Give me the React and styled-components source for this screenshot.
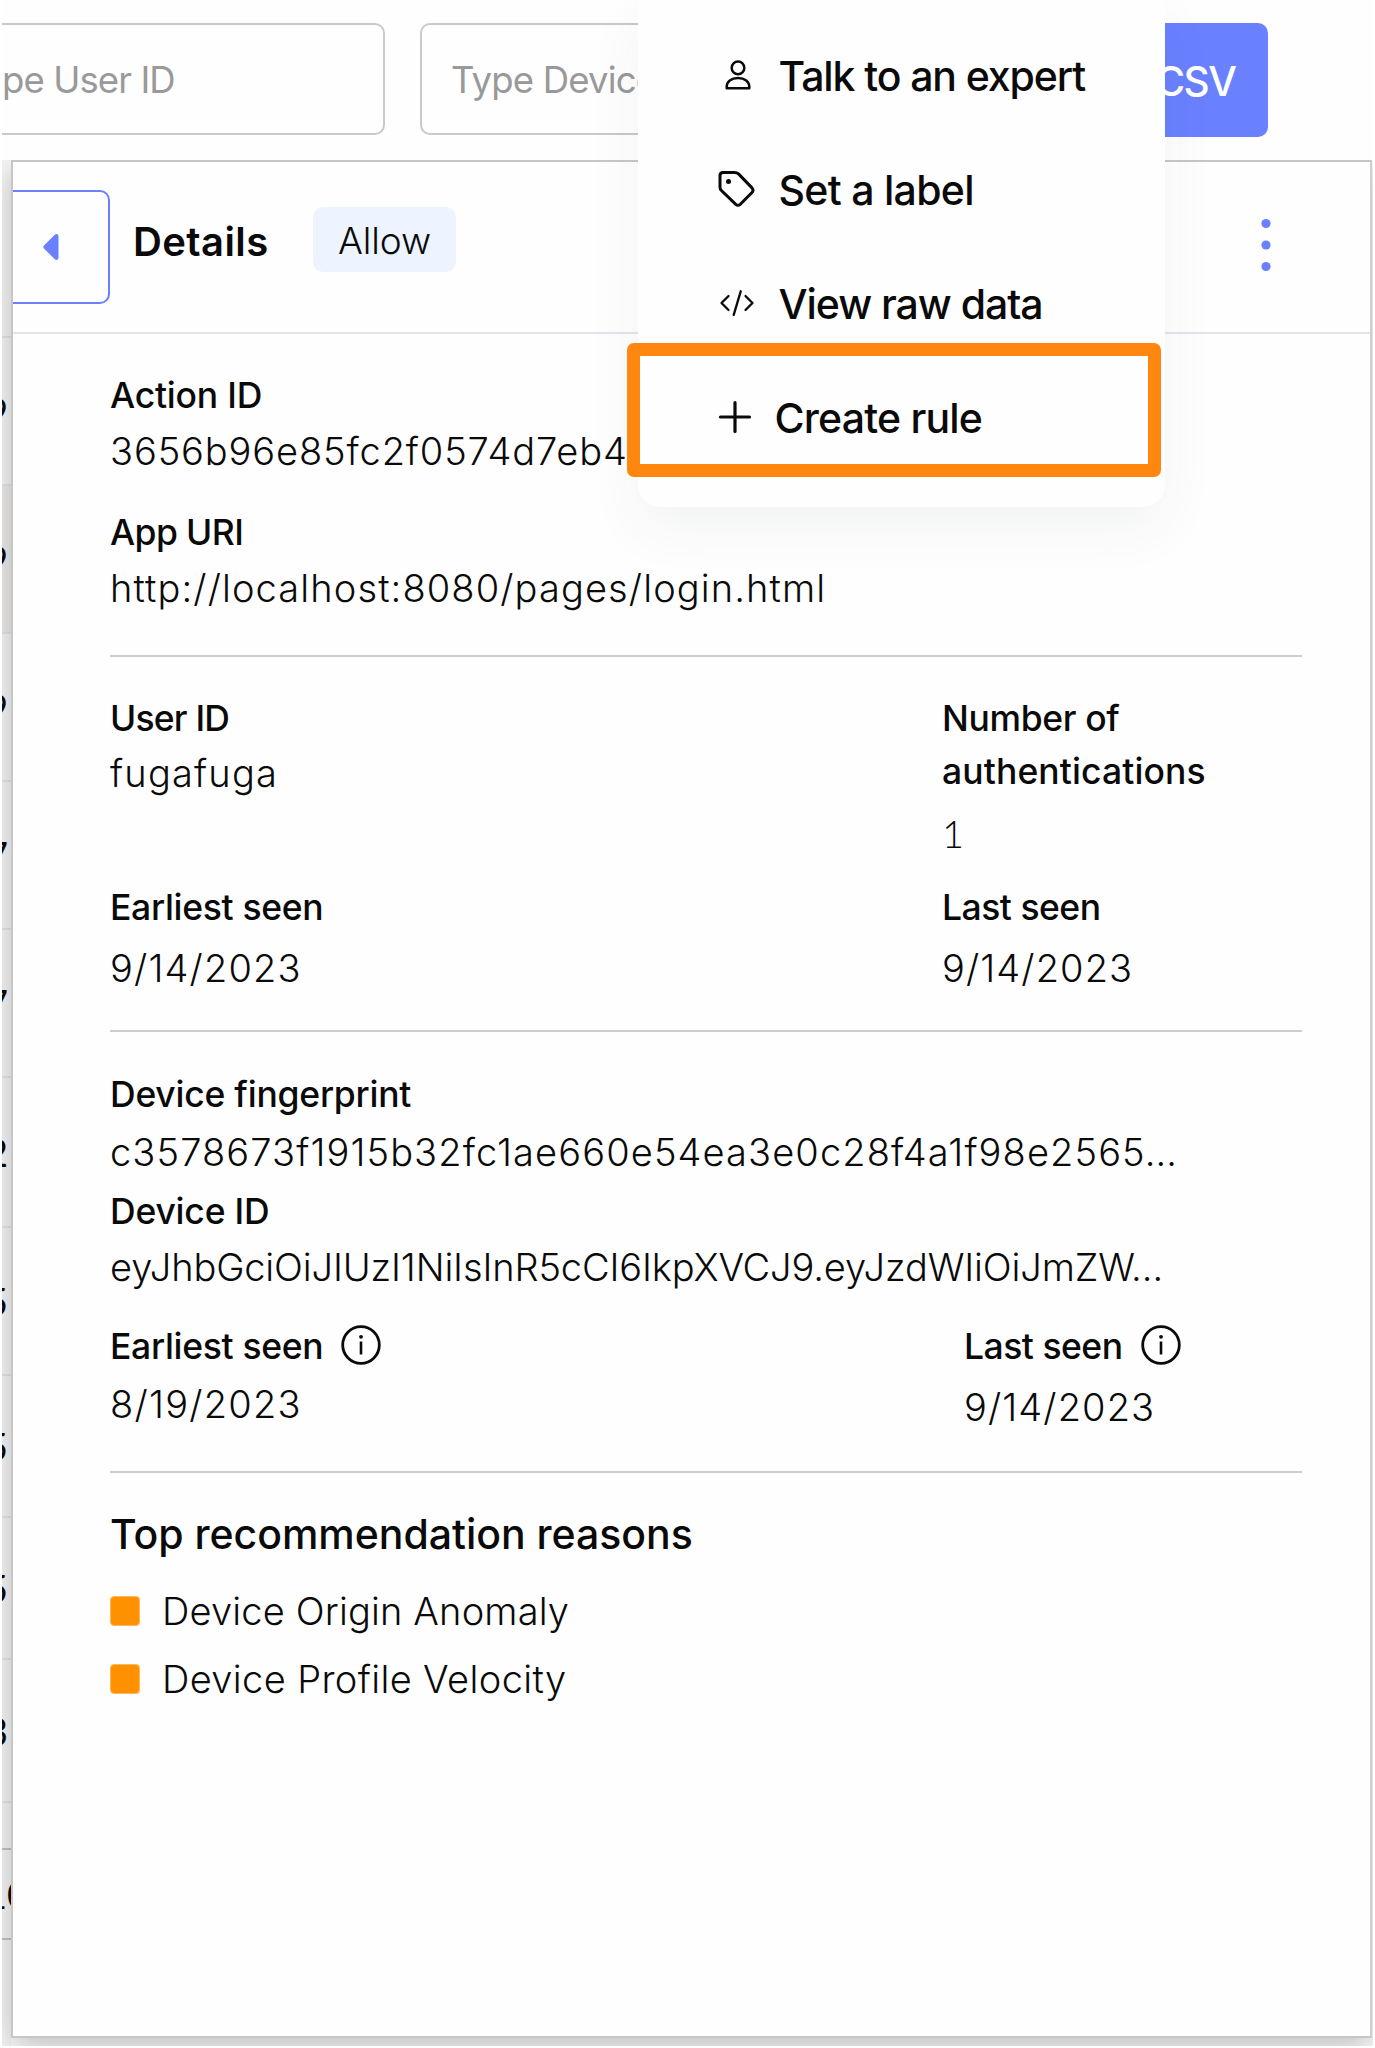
import React from "react";
import styled, { createGlobalStyle, css } from "styled-components";

const Global = createGlobalStyle`
  * { box-sizing: border-box; }
  body { margin: 0; background: #fff; font-family: Inter, "Liberation Sans", sans-serif; color: #0a0a0a; }
`;

const BLUE = "#6980ff";

const Page = styled.div`
  width: 1375px;
  height: 2048px;
  padding: 0 2px 2px;
  background: #fff;
  overflow: hidden;
`;
const Screen = styled.div`
  position: relative;
  height: 2046px;
  display: flex;
  flex-direction: column;
  overflow: hidden;
  background: #fefefe;
`;
const Toolbar = styled.div`
  position: relative;
  z-index: 1;
  flex: none;
  height: 160px;
  padding-top: 23px;
  display: flex;
  align-items: flex-start;
  background: #fefefe;
`;
const Field = styled.div`
  flex: none;
  width: 454px;
  height: 112px;
  margin-left: ${(p) => p.$ml}px;
  padding-left: 29px;
  border: 2px solid #c9c9c9;
  border-radius: 10px;
  font-size: 36.5px;
  line-height: 110px;
  letter-spacing: ${(p) => p.$ls}px;
  white-space: nowrap;
  color: #999;
`;
const CsvButton = styled.div`
  width: 200px;
  height: 114px;
  margin-left: auto;
  margin-right: 105.5px;
  padding-right: 32px;
  border-radius: 10px;
  background: #6a81ff;
  color: #fff;
  font-size: 40.5px;
  font-weight: 500;
  line-height: 118px;
  letter-spacing: -1.5px;
  text-align: right;
  white-space: nowrap;
`;
const Main = styled.div`
  flex: 1;
  display: flex;
  min-height: 0;
`;
const Strip = styled.div`
  flex: none;
  width: 9px;
  background: #f7f7f7;
  overflow: hidden;
`;
const StripRow = styled.div`
  display: flex;
  align-items: center;
  justify-content: flex-end;
  height: ${(p) => p.$h}px;
  border-bottom: 2px solid ${(p) => (p.$dark ? "#c4c4c4" : "#e6e6e6")};
  background: ${(p) => (p.$active ? "#efebeb" : "transparent")};
  font-family: Lato, sans-serif;
  font-size: 38px;
  white-space: nowrap;
`;
const StripText = styled.span`
  margin-right: ${(p) => p.$mr ?? 3}px;
`;
const Panel = styled.div`
  position: relative;
  flex: none;
  width: 1361px;
  height: 1878px;
  border: 2px solid #c6c6c6;
  border-right-color: #cfcfcf;
  background: #fefefe;
  box-shadow: 0 10px 30px rgba(0, 0, 0, 0.25);
`;
const Header = styled.div`
  display: flex;
  align-items: center;
  height: 172px;
  border-bottom: 2px solid #e0e5eb;
`;
const BackButton = styled.div`
  display: flex;
  align-items: center;
  width: 97px;
  height: 114px;
  padding-left: 28px;
  border: 2px solid ${BLUE};
  border-left: 0;
  border-radius: 0 10px 10px 0;
`;
const Title = styled.div`
  margin: 0 0 11px 23px;
  width: 180px;
  font-size: 40px;
  font-weight: 600;
  letter-spacing: 0.4px;
`;
const Badge = styled.div`
  width: 143px;
  height: 65px;
  margin-bottom: 16px;
  border-radius: 10px;
  background: #edf4ff;
  font-size: 37px;
  font-weight: 300;
  line-height: 67px;
  letter-spacing: -0.1px;
  text-align: center;
`;
const Dots = styled.svg`
  margin: 0 98px 4px auto;
`;
const Body = styled.div`
  width: 1289px;
  padding: 0 0 0 97px;
`;
const Section = styled.section`
  display: grid;
  grid-template-columns: ${(p) => p.$cols || "1fr"};
  padding: ${(p) => p.$pt}px 0 ${(p) => p.$pb}px;
  border-bottom: ${(p) => (p.$last ? 0 : 2)}px solid #cdcdcd;
`;
const line = css`
  display: flex;
  align-items: center;
  height: 52px;
  margin-top: ${(p) => p.$mt || 0}px;
  letter-spacing: ${(p) => p.$ls || 0}px;
  white-space: nowrap;
`;
const Label = styled.div`
  ${line}
  font-size: 35.5px;
  font-weight: 500;
`;
const Value = styled.div`
  ${line}
  font-size: 38px;
  font-weight: 300;
`;
const Count = styled(Value)`
  font-family: Lato, sans-serif;
`;
const Heading = styled.div`
  ${line}
  font-size: 41px;
  font-weight: 500;
`;
const Reason = styled(Value)`
  gap: 22px;
  &::before {
    content: "";
    width: 28px;
    height: 28px;
    border: 1px solid #ffb95c;
    border-radius: 4px;
    background: #ff9000;
  }
`;
const InfoSvg = styled.svg`
  margin: -2px 0 0 18px;
`;
const Menu = styled.div`
  position: absolute;
  z-index: 2;
  left: 636px;
  top: 0;
  width: 527px;
  height: 507px;
  padding-top: 19px;
  border-radius: 0 0 22px 22px;
  background: #fefefe;
  box-shadow: 0 22px 56px rgba(20, 50, 40, 0.055);
`;
const MenuItem = styled.div`
  display: flex;
  align-items: center;
  height: 114px;
  padding-left: 78px;
  font-size: 41px;
  font-weight: 500;
  letter-spacing: ${(p) => p.$ls}px;
  white-space: nowrap;
`;
const IconSlot = styled.span`
  flex: none;
  display: flex;
  justify-content: center;
  width: ${(p) => p.$w}px;
  margin: 0 ${(p) => p.$mr}px 3px 0;
`;
const Highlight = styled.div`
  position: absolute;
  left: -11px;
  top: 343px;
  width: 534px;
  height: 134px;
  border: 13px solid #ff870f;
  border-radius: 7px;
`;

const Info = () => (
  <InfoSvg width="40" height="40" viewBox="0 0 40 40" fill="none" stroke="#0a0a0a">
    <circle cx="20" cy="20" r="18.3" strokeWidth="2.8" />
    <path d="M20 16.500v13" strokeWidth="2.6" />
    <circle cx="20" cy="11.8" r="1.9" fill="#0a0a0a" stroke="none" />
  </InfoSvg>
);
const PersonIcon = () => (
  <svg width="26" height="30" viewBox="0 0 26 30" fill="none" stroke="#0a0a0a" strokeWidth="2.5">
    <circle cx="13" cy="7.900" r="6.300" />
    <path d="M1.700 28.200v-1.500c0-5.200 4.500-8.700 11.300-8.700s11.300 3.500 11.300 8.700v1.500z" strokeLinejoin="round" />
  </svg>
);
const TagIcon = () => (
  <svg width="37" height="38" viewBox="0 0 37 38" fill="none" stroke="#0a0a0a" strokeWidth="3" strokeLinejoin="round">
    <path d="M2 5.500q0-3 3-3h11.500q2.400 0 4 1.400l13.500 14q2 2.400 0 4.600L22.300 34.300q-2.300 2-4.500 0L3.400 20.500q-1.400-1.400-1.400-3.600z" />
    <circle cx="10.500" cy="11.500" r="2.500" fill="#0a0a0a" stroke="none" />
  </svg>
);
const CodeIcon = () => (
  <svg width="36" height="28" viewBox="0 0 36 28" fill="none" stroke="#0a0a0a" strokeWidth="2.300" strokeLinecap="round" strokeLinejoin="round">
    <path d="M9.500 7 2.500 14l7 7M26.500 7l7 7-7 7M21.700 2.300l-7 23.500" />
  </svg>
);
const PlusIcon = () => (
  <svg width="34" height="34" viewBox="0 0 34 34" fill="none" stroke="#0a0a0a" strokeWidth="3.200" strokeLinecap="round">
    <path d="M17 2.500v29M2.500 17h29" />
  </svg>
);

const STRIP = [
  { h: 178 },
  { h: 148, t: "9" },
  { h: 148, t: "9", active: true },
  { h: 148, t: "9" },
  { h: 148, t: "7" },
  { h: 148, t: "7" },
  { h: 150, t: "2" },
  { h: 148, t: "5" },
  { h: 142, t: "5" },
  { h: 142, t: "5" },
  { h: 143, t: "3" },
  { h: 47, dark: true },
  { h: 90, t: "10", dark: true, mr: -18 },
];

export default function App() {
  return (
    <>
      <Global />
      <Page>
        <Screen>
          <Toolbar>
            <Field $ml={-71} $ls={-0.9}>Type User ID</Field>
            <Field $ml={35} $ls={-0.8}>Type Device</Field>
            <CsvButton>CSV</CsvButton>
          </Toolbar>
          <Main>
            <Strip>
              {STRIP.map((r, i) => (
                <StripRow key={i} $h={r.h} $dark={r.dark} $active={r.active}>
                  {r.t && <StripText $mr={r.mr}>{r.t}</StripText>}
                </StripRow>
              ))}
            </Strip>
            <Panel>
              <Header>
                <BackButton>
                  <svg width="20" height="30" viewBox="0 0 20 30">
                    <path d="M13.500 3 3 13.500q-1.500 1.500 0 3L13.500 27q3.500 2.500 4-1.500v-21q-.5-4-4-1.500z" fill={BLUE} />
                  </svg>
                </BackButton>
                <Title>Details</Title>
                <Badge>Allow</Badge>
                <Dots width="12" height="54" viewBox="0 0 12 54" fill={BLUE}>
                  <circle cx="6" cy="5.500" r="4.600" />
                  <circle cx="6" cy="27" r="4.600" />
                  <circle cx="6" cy="48.500" r="4.600" />
                </Dots>
              </Header>
              <Body>
                <Section $pt={35} $pb={41}>
                  <Label $ls={-0.2}>Action ID</Label>
                  <Value $mt={4} $ls={0.88}>3656b96e85fc2f0574d7eb4</Value>
                  <Label $mt={29} $ls={-0.6}>App URI</Label>
                  <Value $mt={4} $ls={1.11}>http://localhost:8080/pages/login.html</Value>
                </Section>
                <Section $cols="832px 1fr" $pt={35} $pb={36.5}>
                  <div>
                    <Label $ls={-0.8}>User ID</Label>
                    <Value $mt={3} $ls={1.2}>fugafuga</Value>
                  </div>
                  <div>
                    <Label $ls={-0.35}>Number of</Label>
                    <Label $mt={1} $ls={0.1}>authentications</Label>
                    <Count $mt={9.5}>1</Count>
                  </div>
                  <div>
                    <Label $mt={22.5} $ls={-0.32}>Earliest seen</Label>
                    <Value $mt={8.5} $ls={1.15}>9/14/2023</Value>
                  </div>
                  <div>
                    <Label $mt={22.5} $ls={-0.5}>Last seen</Label>
                    <Value $mt={8.5} $ls={1.1}>9/14/2023</Value>
                  </div>
                </Section>
                <Section $pt={36} $pb={38} $cols="854px 1fr">
                  <div>
                    <Label $ls={-0.23}>Device fingerprint</Label>
                    <Value $mt={5.5} $ls={1.11}>c3578673f1915b32fc1ae660e54ea3e0c28f4a1f98e2565…</Value>
                    <Label $mt={7.5} $ls={-0.2}>Device ID</Label>
                    <Value $mt={4} $ls={-0.14}>eyJhbGciOiJIUzI1NiIsInR5cCI6IkpXVCJ9.eyJzdWIiOiJmZW…</Value>
                  </div>
                  <div />
                  <div>
                    <Label $mt={27} $ls={-0.32}>Earliest seen<Info /></Label>
                    <Value $mt={6} $ls={1.25}>8/19/2023</Value>
                  </div>
                  <div>
                    <Label $mt={27} $ls={-0.5}>Last seen<Info /></Label>
                    <Value $mt={9} $ls={1.1}>9/14/2023</Value>
                  </div>
                </Section>
                <Section $last $pt={35} $pb={0}>
                  <Heading $ls={-0.03}>Top recommendation reasons</Heading>
                  <Reason $mt={24.5} $ls={0.16}>Device Origin Anomaly</Reason>
                  <Reason $mt={16} $ls={0.37}>Device Profile Velocity</Reason>
                </Section>
              </Body>
            </Panel>
          </Main>
          <Menu>
            <MenuItem $ls={-1.1}><IconSlot $w={44} $mr={18.5}><PersonIcon /></IconSlot>Talk to an expert</MenuItem>
            <MenuItem $ls={-0.7}><IconSlot $w={41} $mr={21.5}><TagIcon /></IconSlot>Set a label</MenuItem>
            <MenuItem $ls={-1.05}><IconSlot $w={42} $mr={20.5}><CodeIcon /></IconSlot>View raw data</MenuItem>
            <MenuItem $ls={-0.8}><IconSlot $w={38} $mr={20.5}><PlusIcon /></IconSlot>Create rule</MenuItem>
            <Highlight />
          </Menu>
        </Screen>
      </Page>
    </>
  );
}
